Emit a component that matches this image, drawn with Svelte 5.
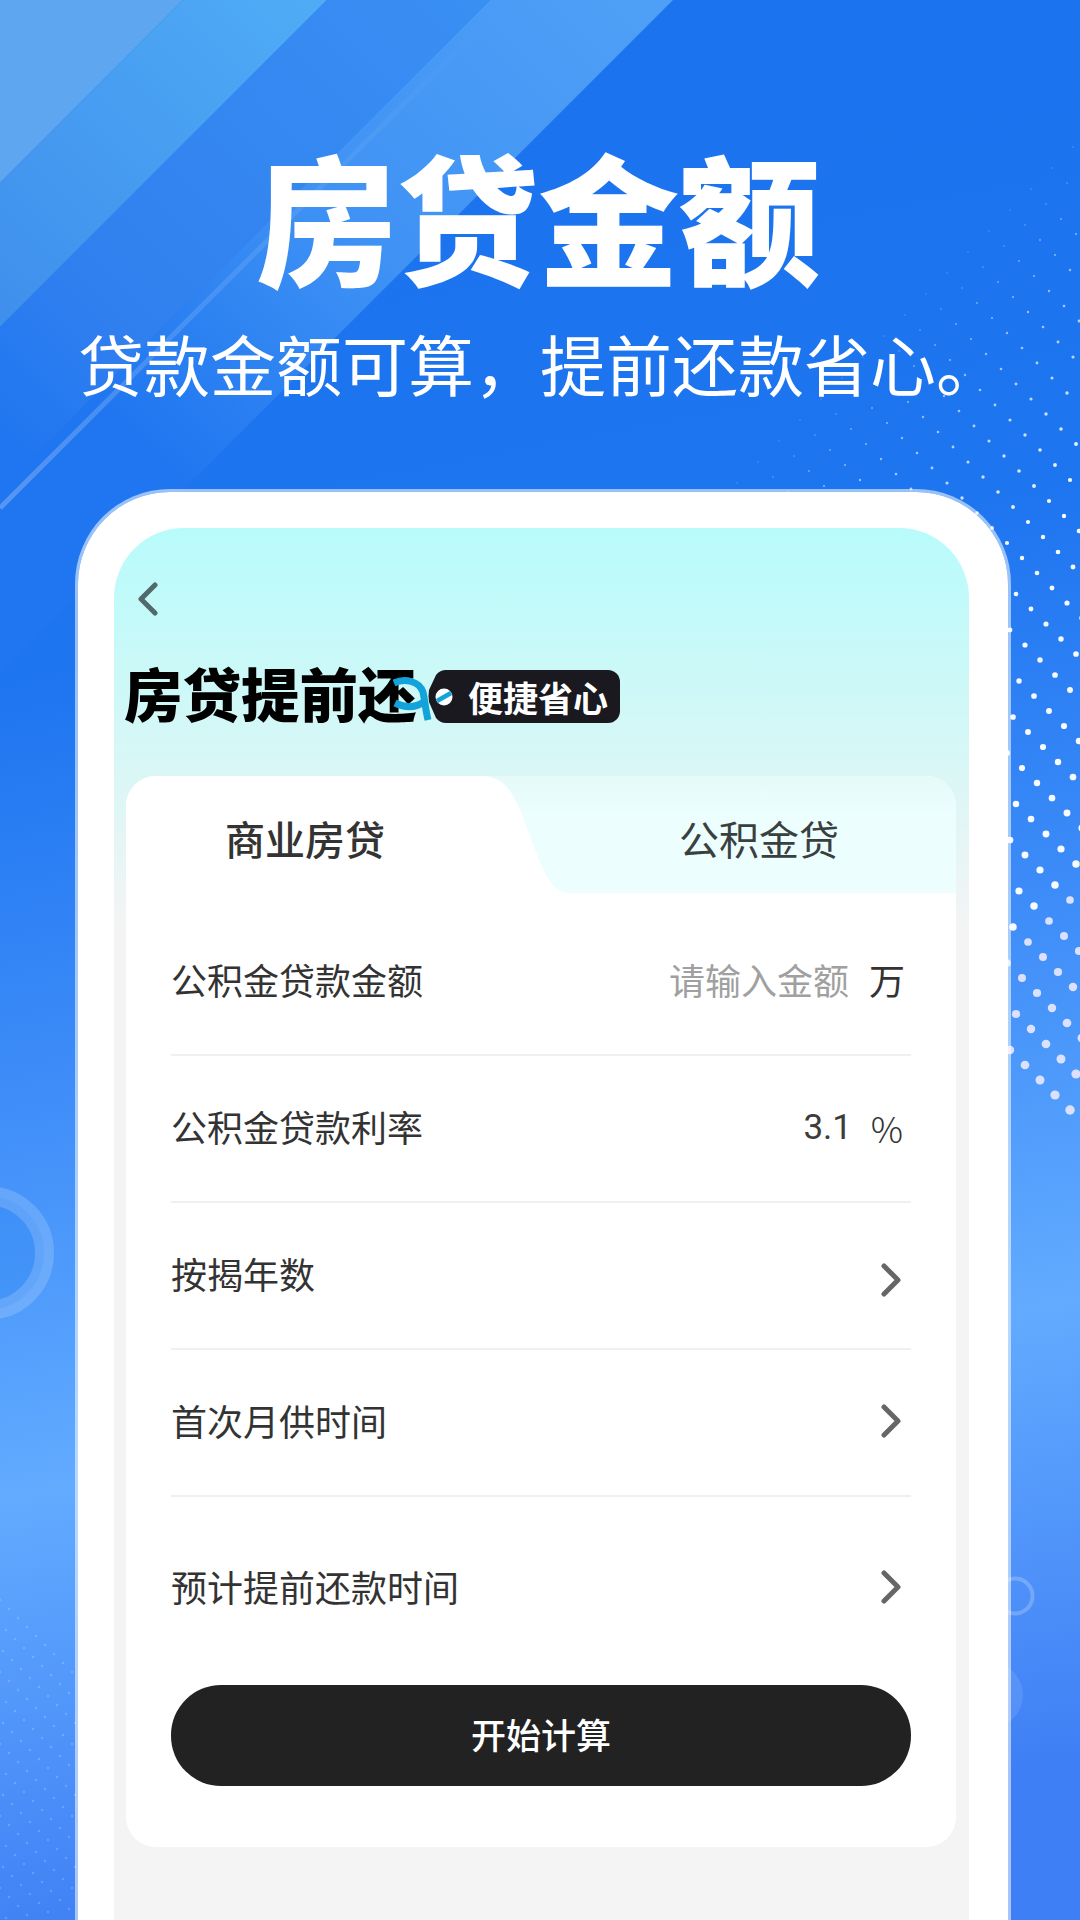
<script lang="ts">
	// right-hand dot field, a skewed lattice that grows towards the lower right
	const bigDots: { x: number; y: number; r: number; o: number; f: string }[] = [];
	for (let i = -70; i < 70; i++) {
		for (let j = -40; j < 40; j++) {
			const x = 1022 + 15 * i + 21 * j;
			const y = 768 + 15 * i - 21 * j;
			const c = x + y;
			if (x < 560 || x > 1084 || y < 60 || c < 1200 || y - x > 44) continue;
			bigDots.push({
				x,
				y,
				r: 0.6 + ((c - 1200) / 900) * 3.8,
				o: Math.min(0.96, 0.25 + (c - 1200) / 500),
				f: c > 1950 ? '#e2e3ff' : '#ffffff'
			});
		}
	}

	const smallDots: { x: number; y: number }[] = [];
	for (let i = -20; i < 140; i++) {
		for (let j = -40; j < 40; j++) {
			const x = 9 * i + 12 * j;
			const y = 1600 + 9 * i - 12 * j;
			if (x < 0 || x > 76 || y > 1920 || y < 1597 + x) continue;
			smallDots.push({ x, y });
		}
	}

	const rows = [
		{ label: '公积金贷款金额', placeholder: '请输入金额', unit: '万' },
		{ label: '公积金贷款利率', value: '3.1', unit: '%' },
		{ label: '按揭年数', arrow: true, nudge: true },
		{ label: '首次月供时间', arrow: true },
		{ label: '预计提前还款时间', arrow: true }
	];
</script>

<div class="page">
	<svg class="backdrop" width="1080" height="1920" viewBox="0 0 1080 1920">
		<defs>
			<linearGradient id="base" gradientUnits="userSpaceOnUse" x1="0" y1="0" x2="350" y2="1890">
				<stop offset="0" stop-color="#1b72ee" />
				<stop offset="0.35" stop-color="#1e75f0" />
				<stop offset="0.55" stop-color="#3c8bf8" />
				<stop offset="0.767" stop-color="#62abff" />
				<stop offset="1" stop-color="#3f7ff5" />
			</linearGradient>
			<linearGradient id="bandA" gradientUnits="userSpaceOnUse" x1="300" y1="0" x2="0" y2="300">
				<stop offset="0" stop-color="#4fabf6" />
				<stop offset="1" stop-color="#3f90ec" />
			</linearGradient>
			<linearGradient id="bandB" gradientUnits="userSpaceOnUse" x1="480" y1="0" x2="20" y2="460">
				<stop offset="0" stop-color="#3a8ff3" />
				<stop offset="0.75" stop-color="#307fef" />
				<stop offset="1" stop-color="#1f76f0" />
			</linearGradient>
			<linearGradient id="bandC" gradientUnits="userSpaceOnUse" x1="640" y1="0" x2="180" y2="480">
				<stop offset="0" stop-color="#4ea0f6" />
				<stop offset="0.55" stop-color="#3f92f4" />
				<stop offset="1" stop-color="#1f76f0" />
			</linearGradient>
			<linearGradient id="thin" gradientUnits="userSpaceOnUse" x1="490" y1="18" x2="0" y2="508">
				<stop offset="0" stop-color="#ffffff" stop-opacity="0" />
				<stop offset="0.6" stop-color="#ffffff" stop-opacity="0.12" />
				<stop offset="1" stop-color="#ffffff" stop-opacity="0.24" />
			</linearGradient>
		</defs>
		<rect width="1080" height="1920" fill="url(#base)" />
		<polygon points="0,0 183,0 0,183" fill="#5ea6ef" />
		<polygon points="183,0 327,0 0,327 0,183" fill="url(#bandA)" />
		<polygon points="327,0 490,0 0,490 0,327" fill="url(#bandB)" />
		<polygon points="490,0 673,0 0,673 0,490" fill="url(#bandC)" />
		<line x1="490" y1="18" x2="0" y2="508" stroke="url(#thin)" stroke-width="5" />

		{#each bigDots as d}
			<circle cx={d.x} cy={d.y} r={d.r} fill={d.f} opacity={d.o} />
		{/each}
		{#each smallDots as d}
			<circle cx={d.x} cy={d.y} r="1.2" fill="#ffffff" opacity="0.2" />
		{/each}

		<circle cx="-13" cy="1253" r="57" fill="#2f86f4" opacity="0.35" />
		<circle cx="-13" cy="1253" r="57.5" fill="none" stroke="#ffffff" stroke-opacity="0.17" stroke-width="19" />
		<circle cx="1015" cy="1596" r="17.5" fill="none" stroke="#ffffff" stroke-opacity="0.22" stroke-width="4" />
		<circle cx="990" cy="1695" r="33" fill="#ffffff" opacity="0.1" />
	</svg>

	<header class="hero">
		<h1>房贷金额</h1>
		<p>贷款金额可算，提前还款省心。</p>
	</header>

	<section class="phone">
		<div class="screen">
			<svg class="back" width="20" height="34" viewBox="0 0 20 34">
				<path d="M17 3 L3 17 L17 31" fill="none" stroke="#51696a" stroke-width="5" stroke-linecap="round" stroke-linejoin="round" />
			</svg>

			<div class="title-row">
				<h2>房贷提前还</h2>
				<div class="tag">
					<svg class="tag-head" width="73" height="53" viewBox="0 0 73 53">
						<path d="M73 0 H53 Q47 0 43 5 L36 20 Q35 26 36 32 L43 48 Q47 53 53 53 H73 Z" fill="#1a191f" />
						<circle cx="51" cy="27" r="8.5" fill="#ffffff" />
						<path d="M44 31 L58 23" stroke="#12a3da" stroke-width="4.5" />
						<path d="M1 13 C12 8 26 11 30 22 C32 32 33 42 35 50" fill="none" stroke="#12a3da" stroke-width="7" />
						<path d="M2 33 C12 38 22 38 31 32" fill="none" stroke="#12a3da" stroke-width="7" />
					</svg>
					<span>便捷省心</span>
				</div>
			</div>

			<div class="card">
				<div class="tabs">
					<button class="tab active">商业房贷</button>
					<svg class="tab-slope" width="88" height="117" viewBox="0 0 88 117">
						<path d="M0 0 C24 0 32 18 40 36 L58 84 C68 108 76 117 88 117 H0 Z" fill="#ffffff" />
					</svg>
					<button class="tab">公积金贷</button>
				</div>

				<div class="rows">
					{#each rows as row}
						<div class="row">
							<span class="label">{row.label}</span>
							{#if row.placeholder}
								<span class="hint">{row.placeholder}</span>
							{/if}
							{#if row.value}
								<span class="value">{row.value}</span>
							{/if}
							{#if row.unit}
								<span class="unit" class:latin={row.value}>{row.unit}</span>
							{/if}
							{#if row.arrow}
								<svg class="arrow" class:nudge={row.nudge} width="20" height="34" viewBox="0 0 20 34">
									<path d="M3 3 L17 17 L3 31" fill="none" stroke="#666666" stroke-width="5" stroke-linecap="round" stroke-linejoin="round" />
								</svg>
							{/if}
						</div>
					{/each}
				</div>

				<button class="submit">开始计算</button>
			</div>
		</div>
	</section>
</div>

<style>
	:global(body) {
		margin: 0;
	}

	.page {
		position: relative;
		width: 1080px;
		height: 1920px;
		overflow: hidden;
		font-family: 'Noto Sans CJK SC', 'Noto Sans', sans-serif;
	}

	.backdrop {
		position: absolute;
		left: 0;
		top: 0;
	}

	.hero {
		position: relative;
		padding-top: 134px;
		text-align: center;
		color: #fff;
	}

	.hero h1 {
		margin: 0 0 0 -4px;
		font-size: 141px;
		line-height: 160px;
		font-weight: 900;
	}

	.hero p {
		margin: 23px 0 0;
		font-size: 66px;
		line-height: 90px;
		font-weight: 400;
	}

	.phone {
		position: relative;
		box-sizing: border-box;
		width: 936px;
		height: 1431px;
		margin: 82px 0 0 75px;
		padding: 36px 39px 0 36px;
		background: #fff;
		background-clip: padding-box;
		border: 3px solid rgba(255, 255, 255, 0.55);
		border-bottom: none;
		border-radius: 95px 95px 0 0;
	}

	.screen {
		height: 100%;
		box-sizing: border-box;
		padding: 54px 13px 0 12px;
		border-radius: 70px 70px 0 0;
		background: linear-gradient(180deg, #b8fbfb 0, #d7f7f6 230px, #f4f4f4 400px);
	}

	.back {
		display: block;
		margin-left: 12px;
	}

	.title-row {
		display: flex;
		align-items: center;
		height: 53px;
		margin-top: 54px;
	}

	.title-row h2 {
		margin: 0 0 9px -2px;
		width: 292px;
		font-size: 58.5px;
		line-height: 44px;
		font-weight: 900;
		color: #000;
		white-space: nowrap;
	}

	.tag {
		display: flex;
		align-items: center;
		height: 53px;
		margin-left: -23px;
	}

	.tag-head {
		display: block;
	}

	.tag span {
		height: 53px;
		padding: 0 12px 0 2px;
		line-height: 53px;
		font-size: 35px;
		font-weight: 700;
		color: #fff;
		background: #1a191f;
		border-radius: 0 12px 12px 0;
	}

	.card {
		margin-top: 53px;
		height: 1071px;
		box-sizing: border-box;
		background: #fff;
		border-radius: 30px;
		overflow: hidden;
	}

	.tabs {
		display: flex;
		height: 117px;
		background: linear-gradient(180deg, #e6fafa 0, #ecfefe 40px);
	}

	.tab {
		flex: 1;
		padding: 8px 7px 0 0;
		border: none;
		background: none;
		font: inherit;
		font-size: 40px;
		line-height: 109px;
		color: #3a3f3f;
	}

	.tab.active {
		flex: 0 0 355px;
		padding: 8px 0 0 3px;
		background: #fff;
		font-weight: 500;
		color: #333;
	}

	.tab-slope {
		display: block;
		flex: none;
	}

	.rows {
		padding: 16px 45px 0;
	}

	.row {
		display: flex;
		align-items: center;
		box-sizing: border-box;
		height: 147px;
		padding: 0 6px 3px 0;
		border-bottom: 2px solid #f0f0f0;
		font-size: 36px;
		font-weight: 400;
		color: #333;
	}

	.row:last-child {
		height: 182px;
		border-bottom: none;
	}

	.label {
		margin-right: auto;
		padding-bottom: 2px;
	}

	.hint {
		padding-bottom: 2px;
		color: #a0a0a0;
	}

	.value {
		margin-right: -3px;
		font-family: Roboto, sans-serif;
		font-size: 35px;
		color: #3c3c3c;
	}

	.unit {
		width: 36px;
		margin-left: 20px;
		padding-bottom: 2px;
		text-align: center;
	}

	.unit.latin {
		padding-bottom: 0;
		font-weight: 300;
	}

	.arrow {
		display: block;
		margin-right: 4px;
	}

	.arrow.nudge {
		margin-top: 11px;
	}

	.submit {
		display: block;
		width: 740px;
		height: 101px;
		margin: 6px 45px 0;
		padding: 0 0 4px;
		border: none;
		border-radius: 50px;
		background: #222;
		color: #fff;
		font: inherit;
		font-size: 35px;
		font-weight: 500;
	}
</style>
